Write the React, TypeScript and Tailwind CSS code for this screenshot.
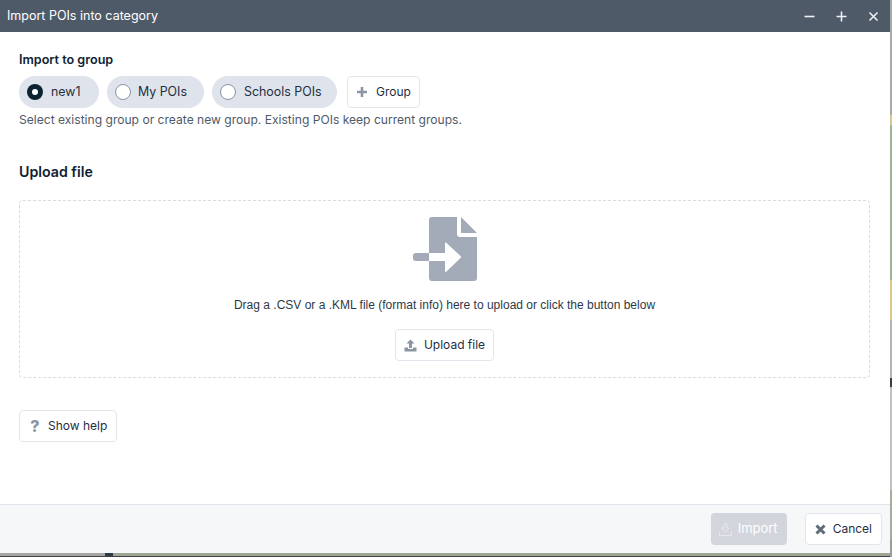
// App.tsx
import type { ReactNode } from "react";

const groups = [
  { label: "new1", checked: true, width: "w-[80px] gap-[8px]" },
  { label: "My POIs", checked: false, width: "w-[97px] gap-[7px]" },
  { label: "Schools POIs", checked: false, width: "w-[125px] gap-[8px]" },
];

// map showing behind the dialog on the right edge
const mapRight = [
  { h: "h-[115px]", bg: "bg-[#a9a9a7]" },
  { h: "h-[10px]", bg: "bg-[#d8c88e]" },
  { h: "h-[155px]", bg: "bg-[#a0b394]" },
  { h: "h-[40px]", bg: "bg-[#d9c98a]" },
  { h: "h-[58px]", bg: "bg-[#b5b5b5]" },
  { h: "h-[9px]", bg: "bg-[#3c3c3c]" },
  { h: "h-[103px]", bg: "bg-[#c2c2c2]" },
  { h: "h-[50px]", bg: "bg-[#a5ae9a]" },
  { h: "h-[17px]", bg: "bg-[#9b9b98]" },
];

function Btn({
  icon,
  children,
  spacing = "gap-[7px] px-[9px]",
}: {
  icon: ReactNode;
  children: ReactNode;
  spacing?: string;
}) {
  return (
    <button
      className={`flex h-[32px] items-center rounded-[4px] border border-[#e2e6ec] bg-white text-[12px] text-[#1f2f3f] ${spacing}`}
    >
      {icon}
      {children}
    </button>
  );
}

function PlusIcon() {
  return (
    <svg width="12" height="12" viewBox="0 0 12 12" fill="#8b95a3">
      <path d="M4.700 1h2.600v3.700H11v2.600H7.300V11H4.700V7.300H1V4.700h3.700z" />
    </svg>
  );
}

function FileImportIcon() {
  return (
    <svg width="64" height="64" viewBox="0 0 64 64" fill="#a3abb9">
      <path d="M16 36V3q0-3 3-3H44V17q0 3 3 3H64V61q0 3-3 3H19q-3 0-3-3V44H32V54q0 1.500 1.500 .5L47.500 41q1-1 0-2L33.500 26q-1.500-1-1.500 .5V36z" />
      <path d="M48 0L64 16H48z" />
      <path d="M3 36H16V44H3q-3 0-3-3v-2q0-3 3-3z" />
    </svg>
  );
}

export default function App() {
  return (
    <div className="flex h-[557px] w-[892px] overflow-hidden bg-[#9a9a92] font-['Inter',sans-serif]">
      <div className="flex w-[890px] flex-col">
        <div className="flex h-[553px] flex-col bg-white">
          {/* Title bar */}
          <div className="flex h-[32px] shrink-0 items-center justify-between bg-[#4f5a69] pl-[7px] pr-[11px]">
            <span className="text-[12.5px] text-white">Import POIs into category</span>
            <div className="flex items-center gap-[21px] text-[#eef0f3]">
              <svg width="11" height="11" viewBox="0 0 11 11" stroke="currentColor" strokeWidth="1.6">
                <path d="M0.500 5.500h10" />
              </svg>
              <svg width="11" height="11" viewBox="0 0 11 11" stroke="currentColor" strokeWidth="1.6">
                <path d="M0.500 5.500h10M5.500 0.500v10" />
              </svg>
              <svg width="11" height="11" viewBox="0 0 11 11" stroke="currentColor" strokeWidth="1.600">
                <path d="M1.500 1.500l8 8M9.500 1.500l-8 8" />
              </svg>
            </div>
          </div>

          {/* Body */}
          <div className="flex flex-1 flex-col px-[19px] pt-[20px]">
            <div className="text-[12.6px] font-semibold leading-[15px] text-[#0f2233]">Import to group</div>
            <div className="mt-[9px] flex items-center gap-[8px]">
              {groups.map((g) => (
                <div
                  key={g.label}
                  className={`flex h-[32px] items-center rounded-full bg-[#dfe3ec] pl-[8px] text-[12.4px] text-[#1f2f3f] ${g.width}`}
                >
                  {g.checked ? (
                    <span className="flex h-[16px] w-[16px] items-center justify-center rounded-full bg-[#0b2233]">
                      <span className="h-[6px] w-[6px] rounded-full bg-white" />
                    </span>
                  ) : (
                    <span className="h-[16px] w-[16px] rounded-full border border-[#8b95a3] bg-white" />
                  )}
                  {g.label}
                </div>
              ))}
              <div className="ml-[2px]">
                <Btn icon={<PlusIcon />} spacing="gap-[8px] px-[8px]">
                  Group
                </Btn>
              </div>
            </div>
            <div className="mt-[4px] text-[12.08px] leading-[16px] text-[#4f5a69]">
              Select existing group or create new group. Existing POIs keep current groups.
            </div>

            <div className="mt-[35px] text-[14.2px] font-semibold leading-[18px] text-[#0f2233]">Upload file</div>

            <div className="mt-[19px] flex h-[178px] w-[851px] flex-col items-center rounded-[4px] border border-dashed border-[#d9dcdf] pt-[16px]">
              <FileImportIcon />
              <div className="mt-[17px] font-['Liberation_Sans',sans-serif] text-[12px] leading-[14px] text-[#2c3a48]">
                Drag a .CSV or a .KML file (format info) here to upload or click the button below
              </div>
              <div className="mt-[17px]">
                <Btn
                  spacing="gap-[7px] px-[8px]"
                  icon={
                    <svg width="13" height="13" viewBox="0 0 13 13" fill="#8b95a3">
                      <path d="M6.500 0.500L10.500 4.500H8V9H5V4.500H2.500z" />
                      <path d="M0.500 8.500H4V10H9V8.500h3.500V12.500H0.500z" />
                    </svg>
                  }
                >
                  Upload file
                </Btn>
              </div>
            </div>

            <div className="mt-[32px] self-start">
              <Btn
                icon={
                  <span className="w-[12px] text-center text-[16px] font-extrabold leading-none text-[#8b95a3]">?</span>
                }
              >
                Show help
              </Btn>
            </div>
          </div>

          {/* Footer */}
          <div className="flex h-[49px] shrink-0 items-center justify-end gap-[18px] border-t border-[#dfe3ec] bg-[#f6f7f9] pr-[8px]">
            <button className="flex h-[32px] w-[76px] items-center gap-[6px] rounded-[4px] bg-[#d2d5db] pl-[8px] text-[13px] text-white">
              <svg width="13" height="13" viewBox="0 0 13 13" fill="none" stroke="#e6e8ec" strokeWidth="1">
                <path d="M5 1h3v4h2.500L6.500 9 2.500 5H5zM0.500 8.500v4h12v-4" />
              </svg>
              Import
            </button>
            <Btn
              icon={
                <svg width="11" height="11" viewBox="0 0 11 11" stroke="#5f6b79" strokeWidth="3">
                  <path d="M1.500 1.500l8 8M9.500 1.500l-8 8" />
                </svg>
              }
            >
              Cancel
            </Btn>
          </div>
        </div>

        {/* map strip below the dialog */}
        <div className="flex h-[4px] border-b border-[#3f4347]">
          <div className="w-[105px] bg-[#a5a5a3]" />
          <div className="w-[8px] bg-[#2b3a48]" />
          <div className="flex-1 bg-[#9fa593]" />
        </div>
      </div>

      {/* map strip right of the dialog */}
      <div className="flex w-[2px] flex-col">
        {mapRight.map((s, i) => (
          <div key={i} className={`${s.h} ${s.bg}`} />
        ))}
      </div>
    </div>
  );
}
